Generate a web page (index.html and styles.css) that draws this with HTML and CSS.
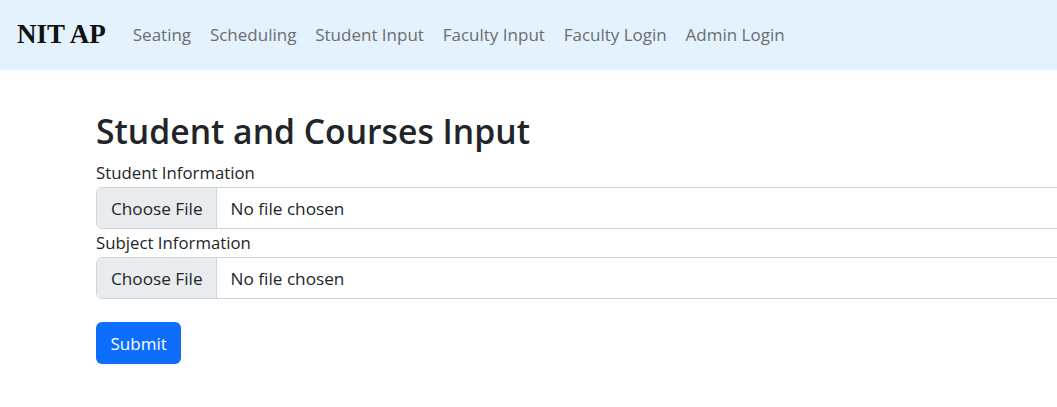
FILE: index.html
```html
<!DOCTYPE html>
<html lang="en">
<head>
<meta charset="utf-8">
<title>Student and Courses Input</title>
<link rel="stylesheet" href="styles.css">
</head>
<body>
<nav class="navbar">
  <a class="brand" href="#">NIT AP</a>
  <ul class="nav-links">
    <li><a href="#">Seating</a></li>
    <li><a href="#">Scheduling</a></li>
    <li><a href="#">Student Input</a></li>
    <li><a href="#">Faculty Input</a></li>
    <li><a href="#">Faculty Login</a></li>
    <li><a href="#">Admin Login</a></li>
  </ul>
</nav>
<main class="container">
  <h1 class="title">Student and Courses Input</h1>
  <form class="form">
    <div class="field">
      <label class="label">Student Information</label>
      <div class="file-input">
        <span class="file-btn">Choose File</span>
        <span class="file-name">No file chosen</span>
      </div>
    </div>
    <div class="field">
      <label class="label">Subject Information</label>
      <div class="file-input">
        <span class="file-btn">Choose File</span>
        <span class="file-name">No file chosen</span>
      </div>
    </div>
    <button type="button" class="btn-submit">Submit</button>
  </form>
</main>
</body>
</html>
```
FILE: styles.css
```css
html, body {
  margin: 0;
  padding: 0;
  overflow: hidden;
}
body {
  font-family: "Open Sans", "Noto Sans", sans-serif;
  color: #212529;
  background: #fff;
  font-size: 16.8px;
}
.navbar {
  height: 70px;
  background: #e3f2fd;
  display: flex;
  align-items: center;
  padding-left: 17px;
  box-sizing: border-box;
}
.brand {
  font-family: "Liberation Serif", serif;
  font-weight: bold;
  font-size: 27px;
  color: #111;
  text-decoration: none;
  margin-right: 27px;
  margin-top: -1px;
}
.nav-links {
  list-style: none;
  margin: -2px 0 0;
  padding: 0;
  display: flex;
  gap: 18.8px;
}
.nav-links a {
  color: #6b6e72;
  text-decoration: none;
  font-size: 17px;
}
.container {
  padding-left: 96px;
  width: 1100px;
}
.title {
  font-size: 33.7px;
  font-weight: 600;
  margin: 41px 0 10px;
  line-height: 1.2;
}
.form {
  display: flex;
  flex-direction: column;
  align-items: flex-start;
}
.field {
  display: flex;
  flex-direction: column;
  width: 100%;
  margin-bottom: 2px;
}
.label {
  line-height: 24px;
  margin-bottom: 2px;
}
.file-input {
  display: flex;
  height: 42px;
  box-sizing: border-box;
  border: 1px solid #ced4da;
  border-radius: 6px;
  overflow: hidden;
  font-size: 17.2px;
}
.file-btn {
  display: flex;
  align-items: center;
  background: #e9ecef;
  border-right: 1px solid #ced4da;
  padding: 0 13px 0 14px;
}
.file-name {
  display: flex;
  align-items: center;
  padding-left: 14px;
}
.btn-submit {
  margin-top: 21px;
  background: #0d6efd;
  color: #fff;
  border: none;
  border-radius: 6px;
  font: inherit;
  font-size: 17px;
  height: 42px;
  padding: 0 14.5px;
}
```
